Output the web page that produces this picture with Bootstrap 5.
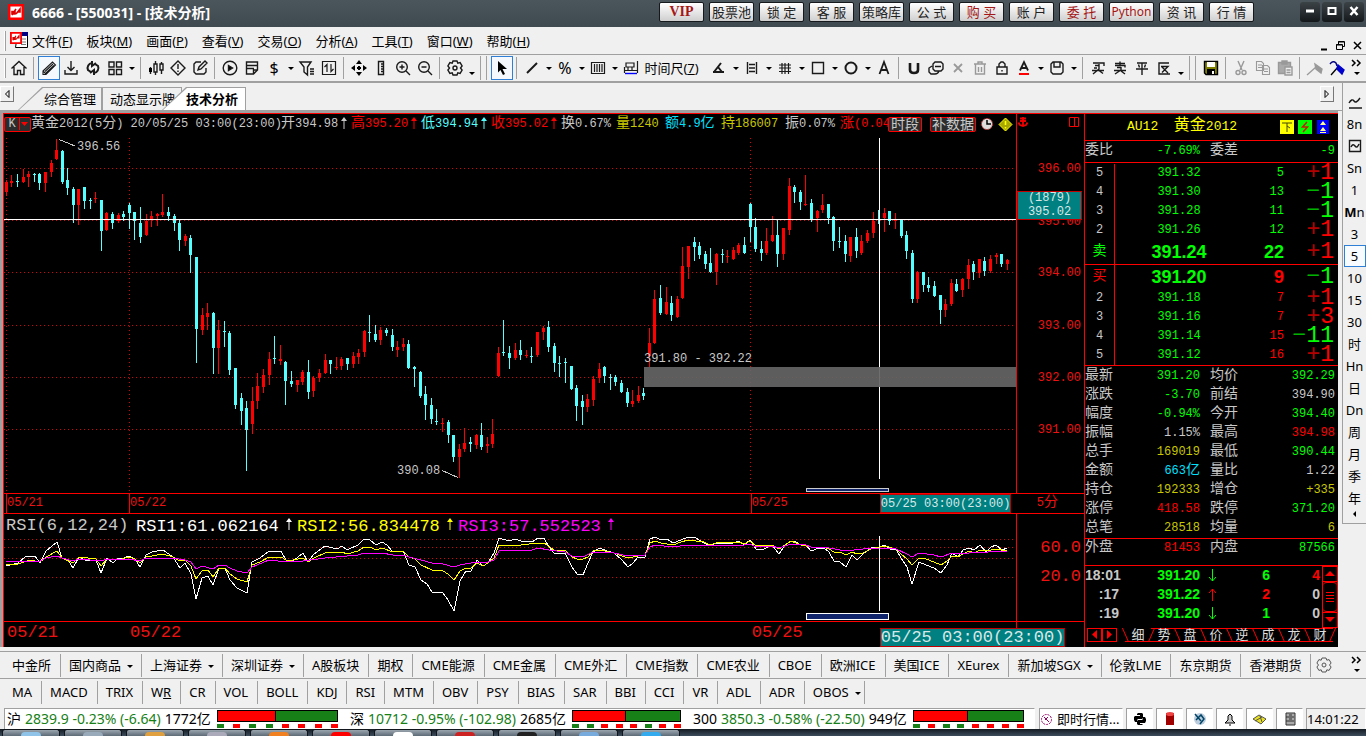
<!DOCTYPE html>
<html lang="zh-CN">
<head>
<meta charset="utf-8">
<meta name="viewport" content="width=device-width, initial-scale=1">
<title>6666 - [550031] - [技术分析]</title>
<link rel="stylesheet" href="https://cdn.jsdelivr.net/npm/bootstrap@5.3.0/dist/css/bootstrap.min.css">
<style>
:root{--face:#f0f0f0;--edge:#a0a0a0;--up:#f00;--down:#0f0;--cy:#54ffff;--txt:#c8c8c8;--yel:#c8c800}
body{font-family:"Noto Sans","Noto Sans CJK SC",sans-serif;font-size:13px;line-height:18px;color:#000;background:var(--face)}
button{border:0;background:none;padding:0;color:inherit;font:inherit;flex-shrink:0;white-space:nowrap}
svg{display:block}
.ico{width:18px;height:18px;fill:none;stroke:#1a1a1a;stroke-width:1.4}
/* title bar */
.title-bar{height:27px;background:linear-gradient(#4b555c,#3f4a50)}
.title-text{font-size:14px;font-weight:700;color:#fff}
.quick{width:45px;height:20px;border:1px solid #15191c;border-radius:2px;background:linear-gradient(#fff,#cfcfcf);font-size:13px;line-height:16px;color:#222;text-align:center}
.quick.hot{color:#a51616}
.quick.py{font-size:12px}
.quick.vip{font-family:"Liberation Serif",serif;font-weight:700;font-size:14px}
.win-btn{width:20px;height:20px;border-radius:3px;background:linear-gradient(#3c4347,#14181b)}
/* menu and tool bars */
.menu-bar{height:28px;border-bottom:1px solid var(--edge)}
.menu-bar a{color:#000;text-decoration:none}
.tool-bar{height:28px;border-bottom:2px solid var(--edge);overflow:hidden}
.grip{width:2px;height:20px;border-left:1px solid #fff;border-right:1px solid var(--edge);flex-shrink:0}
.tb{width:22px;height:24px;display:flex;align-items:center;justify-content:center}
.tb.on{border:1px solid #2f7fd6;background:#f5f9fd}
.tb.off .ico{stroke:#999}
.dd{width:11px;height:24px;display:flex;align-items:center;justify-content:center}
.dd::before,.car::after{content:"";border:3px solid transparent;border-top-color:#000;border-bottom:0}
.dd.low::before{margin-top:10px}
.vsep{width:8px;height:22px;flex-shrink:0;background:linear-gradient(var(--edge),var(--edge)) 3px 0/1px 100% no-repeat}
.gsep{width:14px;height:24px;flex-shrink:0;background:linear-gradient(var(--edge),var(--edge)) 3px 0/1px 100% no-repeat,linear-gradient(var(--edge),var(--edge)) 9px 0/1px 100% no-repeat}
/* page tabs */
.tab-strip{height:28px;border-bottom:1px solid var(--edge)}
.arrow-btn{width:14px;height:16px;border:1px solid #777;border-left-color:#fff;border-top-color:#fff;display:flex;align-items:center;justify-content:center}
.ptab{height:23px;position:relative;background:var(--edge);font-size:13px;line-height:22px;z-index:0}
.ptab::before{content:"";position:absolute;inset:1px 1px 0 1px;background:var(--face);z-index:-1;clip-path:inherit}
.ptab.slant{clip-path:polygon(24px 0,100% 0,100% 100%,0 100%)}
.ptab.active::before{background:#fff}
.ptab.active{font-weight:700;z-index:1}
/* terminal */
.frame{border:solid var(--edge);border-width:2px 0 0 3px}
.term{background:#000;color:var(--txt);border:solid var(--up);border-width:1px 0 0 1px;font-family:"Liberation Mono","Noto Sans CJK SC",monospace;font-size:12px;line-height:18px;white-space:nowrap}
.hz{font-size:14px;line-height:14px}
.big{font-size:17px;line-height:22px}
.c-up{color:var(--up)}.c-dn{color:var(--down)}.c-cy{color:var(--cy)}.c-ye{color:var(--yel)}.c-bl{color:#00e0ff}.c-tx{color:var(--txt)}
.redline-b{border-bottom:1px solid var(--up)}
.redline-t{border-top:1px solid var(--up)}
.redline-r{border-right:1px solid var(--up)}
.axis{width:67px;flex-shrink:0;position:relative;color:#f01010}
.axis span{position:absolute;right:3px;transform:translateY(-50%)}
.plot{min-width:0}
.plot svg,.rsi svg{width:100%;height:100%;position:absolute;inset:0}
.info{position:absolute;left:0;top:0;right:0;height:20px;z-index:2;overflow:hidden}
.info>span{flex-shrink:0}
.arr{display:inline-block;width:8px;height:12px;vertical-align:-2px;margin-left:2px;fill:currentColor;stroke:currentColor}
.plot svg.arr{position:static;width:8px;height:18px;display:inline-block;margin-left:6px}
.q70{width:70px}
.kbtn{height:15px;border:1px solid var(--up);border-radius:2px;background:#2c2c2c;color:var(--txt);line-height:12px}
.note{position:absolute;color:var(--txt)}
.tag{background:#008080;color:#d8e8e8;border:1px solid #c00000}
.date-row{height:20px;position:relative;color:#f01010}
.date-row.tall{height:26px}
.rsi-row{height:108px}
.date-row .at{position:absolute;top:0;bottom:0;border-left:1px solid var(--up)}
.date-row.tall .at{border-left-color:transparent}
.date-row .at.tag{border-left-color:#c00}
.date-row.tall .at.tag{top:6px;line-height:18px;z-index:3}
/* quote panel */
.quote{width:254px;border-left:1px solid var(--up);flex-shrink:0}
.quote table{table-layout:fixed;width:100%;border-collapse:separate;border-spacing:0}
.quote td,.quote th{padding:0;height:19px;line-height:19px;font-weight:400}
#wei{height:22px}
#ask,#stats{padding-top:1px}
.q-head{height:27px;color:#ff0;font-size:13px}
.q-head .hz{font-size:16px}
.flag{width:14px;height:14px}
.best td{height:24px;line-height:24px;font-family:"Liberation Sans",sans-serif;font-weight:700;font-size:18px}
.best th{height:24px}
.quote td.delta{font:23px/19px "Liberation Mono",monospace;text-align:right}
.delta i{font-style:normal;opacity:.7}
.tick td{font-family:"Liberation Sans",sans-serif;font-weight:700;font-size:14px}
.quote table.tick{width:235px}
.sb{width:16px;border:1px solid var(--up);color:var(--up);flex-shrink:0}
.sb button{width:100%;height:15px;font-size:10px;line-height:14px;display:block}
.sb .thumb{border:solid var(--up);border-width:1px 0;border-radius:4px;flex:1}
.q-tab{width:26px;height:14px;position:relative;font-size:13px;line-height:13px;border:solid var(--up);border-width:1px 0;color:#ddd}
.q-tab.active{border-top-color:transparent}
.q-tab::before{content:"";position:absolute;left:0;top:-1px;height:14px;border-left:1px solid var(--up);transform:skewX(24deg)}
.q-tab.back::before,.q-tab.last::after{content:"";position:absolute;top:-1px;height:14px;border-left:1px solid var(--up);transform:skewX(-24deg)}
.q-tab.last::after{right:0}
.sq{width:15px;height:14px;border:1px solid var(--up);display:flex;align-items:center;justify-content:center}
/* period bar */
.period{width:24px;border-left:1px solid var(--edge);flex-shrink:0}
.period button{width:22px;height:22px;line-height:20px;font-size:13px;display:flex;align-items:center;justify-content:center}
.period .on{border:1px solid #2f7fd6;background:#f8fbff}
/* lower bars */
.link-bar{height:27px;border-top:1px solid var(--edge);overflow:hidden}
.link-bar button{height:23px;border-right:1px solid var(--edge);padding:0 9px 0 8px;text-align:center}
.link-bar button.more{border:0;padding:0}
.car::after{display:inline-block;margin:0 -1px 2px 6px}
.status{height:24px;overflow:hidden}
.cell{height:22px;background:#fff;border:1px solid var(--edge);border-right-color:#fff}
.fell{color:#168016}
.idx-part{font-size:14px;flex:1 1 0;white-space:nowrap}
.meter{flex:1;margin:0 10px 0 6px}
.meter .lvl{height:12px;border:1px solid #000;background:#178017}
.meter .lvl div{height:100%;background:#f00;border-right:1px solid #000}
.meter .marks{margin-top:2px}
.meter i{width:7px;height:4px;background:#f00}
.meter i.g{background:#178017}
.task{height:7px;background:linear-gradient(#141b22,#3c4c5c)}
.task div{width:58px;height:7px;background:linear-gradient(#9aa5ae,#5d6b77);border:solid #10161c;border-width:1px 1px 0;border-radius:3px 3px 0 0}
.task div::after{content:"";display:block;width:20px;height:4px;margin:2px auto 0;background:var(--dot,#c6d0d8);border-radius:5px 5px 0 0}
</style>
</head>
<body class="vh-100 d-flex flex-column overflow-hidden">
<svg width="0" height="0" class="position-absolute" aria-hidden="true">
<symbol id="home" viewBox="0 0 18 18"><path d="M1.500 9.500 9 2.500l7.500 7M4 8v7.500h3.500v-4h3v4H14V8"/></symbol>
<symbol id="pencil" viewBox="0 0 18 18"><path stroke-width="1.100" d="M3 12 12.500 3l3 3L6 15.500H3zM5 12.500l8-7.500M6 14l8-7.500M3 12l3 3"/></symbol>
<symbol id="down" viewBox="0 0 18 18"><path d="M9 2v9M5.500 8 9 11.500 12.500 8M3 11v4h12v-4"/></symbol>
<symbol id="sync" viewBox="0 0 18 18"><path stroke-width="2" d="M8 4a5 5 0 0 0-4 7l3 2M10 14a5 5 0 0 0 4-7l-3-2M8 2v5l4-3M10 16v-5l-4 3"/></symbol>
<symbol id="four" viewBox="0 0 18 18"><path d="M3 3h5v5H3zM10.500 3h5v5h-5zM3 10.500h5v5H3zM10.500 10.500h5v5h-5z"/></symbol>
<symbol id="candle" viewBox="0 0 18 18"><path d="M3.500 8v7M8.500 2v14M14.500 3v12"/><path fill="#000" stroke="none" d="M2 9h3v4H2z"/><path fill="#f0f0f0" d="M7 5h3v8H7zM13 5h3v6h-3z"/></symbol>
<symbol id="warn" viewBox="0 0 18 18"><path d="m9 2 7 7-7 7-7-7zM9 5v5M9 11.500v1.500"/></symbol>
<symbol id="edit" viewBox="0 0 18 18"><path d="M10 3H5L3 5v8l2 2h8l2-2V9M7 11l1-3 6-6 2 2-6 6z"/></symbol>
<symbol id="play" viewBox="0 0 18 18"><circle cx="9" cy="9" r="6.800"/><path fill="#000" d="m7.500 6.500 4 2.500-4 2.500z"/></symbol>
<symbol id="memo" viewBox="0 0 18 18"><path d="M3.500 3h11v8l-4 4h-7zM3 6.500h11M3 9.500h8M14.500 11h-4v4"/></symbol>
<symbol id="filter" viewBox="0 0 18 18"><path d="M2 3h11L9.500 8v8L6 13V8zM12 10h4M12 12.500h4M12 15h4"/></symbol>
<symbol id="swap" viewBox="0 0 18 18"><path stroke-width="1.200" d="M2.500 2.500h13v13h-13zM7 13V5.500L4.500 8M11 5v7.500l2.500-2.500"/></symbol>
<symbol id="move" viewBox="0 0 18 18"><path fill="#000" stroke="none" d="m9 1 3 4H6zM9 17l3-4H6zM1 9l4-3v6zM17 9l-4-3v6zM8 7h2v4H8zM7 8h4v2H7z"/></symbol>
<symbol id="ruler" viewBox="0 0 18 18"><path d="M6.500 2.500h5v13h-5zM9 5h2M9 7.500h2M9 10h2M9 12.500h2"/></symbol>
<symbol id="zin" viewBox="0 0 18 18"><circle cx="8" cy="8" r="5.300"/><path d="M8 5.500v5M5.500 8h5M12 12l4 4"/></symbol>
<symbol id="zout" viewBox="0 0 18 18"><circle cx="8" cy="8" r="5.300"/><path d="M5.500 8h5M12 12l4 4"/></symbol>
<symbol id="gear" viewBox="0 0 18 18"><path d="M7 2h4l.8 2.200 2.300-.6 2 3.400L14.500 9l1.600 2-2 3.400-2.300-.6L11 16H7l-.8-2.200-2.300.6-2-3.400L3.500 9 1.900 7l2-3.400 2.300.6z"/><circle cx="9" cy="9" r="2"/></symbol>
<symbol id="cursor" viewBox="0 0 18 18"><path fill="#000" stroke="none" d="m5 2 9 8H9.500l2.500 5-2 1-2.500-5L5 13.500z"/></symbol>
<symbol id="line" viewBox="0 0 18 18"><path stroke-width="2" d="M4 14 14 4"/></symbol>
<symbol id="vbars" viewBox="0 0 18 18"><path stroke-width="1.200" d="M2.500 3.500h13v11h-13zM5.500 5v8M8 5v8M10.500 5v8M13 5v8"/></symbol>
<symbol id="span" viewBox="0 0 18 18"><path stroke-width="1.200" d="M3 4h8v4H3zM5 8v3M9 8v3M1.500 8v6M14.500 2v12M1 11.500h14"/><path stroke="#00f" d="M2 14.500h12"/></symbol>
<symbol id="angle" viewBox="0 0 18 18"><path stroke-width="2" d="M3 13h11M4 13l7-9M8 8l4 5"/></symbol>
<symbol id="hbars" viewBox="0 0 18 18"><path d="M4.500 3v12M13.500 3v12M6 5.500h6M6 9h6M6 12.500h6"/></symbol>
<symbol id="hash" viewBox="0 0 18 18"><path d="M3 6h12M3 9h12M3 12.500h12M6 4v11M9 4v11M12.500 4v11" stroke-width="1.200"/></symbol>
<symbol id="rect" viewBox="0 0 18 18"><path d="M3.500 3.500h11v11h-11z"/></symbol>
<symbol id="circ" viewBox="0 0 18 18"><circle cx="9" cy="9" r="5.500" stroke-width="2"/></symbol>
<symbol id="letter" viewBox="0 0 18 18"><path stroke-width="1.800" d="M4.500 15 9 3l4.500 12M6 11h6"/></symbol>
<symbol id="magnet" viewBox="0 0 18 18"><path stroke-width="2.600" d="M5 4v7q0 3 4 3t4-3V4"/></symbol>
<symbol id="stack" viewBox="0 0 18 18"><path d="M8 3h6l2 2v5l-2 2H8L6 10V5zM12 12q-1 3-4 3H4l-2-2V9l3-2M8 7.500h6"/></symbol>
<symbol id="cross" viewBox="0 0 18 18"><path stroke-width="1.800" d="m5 5 8 8M13 5l-8 8"/></symbol>
<symbol id="bin" viewBox="0 0 18 18"><path d="M3 5h12M7 5V3h4v2M4.500 5v10h9V5M7.500 8v5M10.500 8v5"/></symbol>
<symbol id="lock" viewBox="0 0 18 18"><path d="M4 8h10v7H4zM6 8V5l2-2h2l2 2v3M9 11v1.500"/></symbol>
<symbol id="acol" viewBox="0 0 18 18"><path stroke-width="1.800" d="M5 11.500 9 3l4 8.500M6.500 9h5"/><path stroke="red" stroke-width="2" d="M4 15h10"/></symbol>
<symbol id="save" viewBox="0 0 18 18"><path d="M3 5l2-2h8l2 2v8l-2 2H5l-2-2zM6 3v5h6V3"/></symbol>
<symbol id="buy" viewBox="0 0 18 18"><path d="M4 4h11v3M6 6.500h4M5 9h3M3 11.500h12M10 5v5l-6 5M10 11.500l4 3"/></symbol>
<symbol id="sell" viewBox="0 0 18 18"><path d="M4 4.500h10M9 2.500v4M4 6.500h10v2M6 8.500h4M3 11.500h12M10 8v3l-6 4M10 12l4 3"/></symbol>
<symbol id="flat" viewBox="0 0 18 18"><path d="M4 4h10M3 10h12M9 4v12M5.500 5.500l1 3M12.500 5.500l-1 3"/></symbol>
<symbol id="rev" viewBox="0 0 18 18"><path d="M14 4H4v11h11M6 7.500h7l-6 6M7 8l6 6"/></symbol>
<symbol id="disk" viewBox="0 0 18 18"><path fill="#808000" stroke="#000" d="M2.500 2.500h13v13H4L2.500 14z"/><path fill="#fff" stroke="none" d="M5 3h8v5H5z"/><path fill="#000" stroke="none" d="M5 10h8v6H5z"/><path fill="#fff" stroke="none" d="M10 12h2v3h-2z"/></symbol>
<symbol id="cut" viewBox="0 0 18 18"><path d="M6 2l4 9M12 2 8 11"/><circle cx="6" cy="13.500" r="2"/><circle cx="12" cy="13.500" r="2"/></symbol>
<symbol id="copy" viewBox="0 0 18 18"><path stroke-width="1.100" d="M2.500 2.500h5l2 2v7h-7zM8.500 6.500h5l2 2v7h-7zM4 6h4M4 8.500h4M10 10h4M10 12.500h4"/></symbol>
<symbol id="paste" viewBox="0 0 18 18"><path fill="#aaa" d="M2.500 3.500h12v11h-12zM6 2h5v3H6z"/><path fill="#eee" d="M9 8h7v8H9zM10.500 11h4M10.500 13.500h4"/></symbol>
<symbol id="pin" viewBox="0 0 18 18"><path d="M1 16 10 8"/><path fill="#999" d="m9 5 1 5 5 4 1-4z"/></symbol>
<symbol id="pinb" viewBox="0 0 18 18"><path stroke="#000" d="M3 16 10 8"/><path stroke="#000080" d="M2 5q3-4 6-1l1 3"/><path fill="#00c" stroke="#00c" d="m10 6-1 4 5 5 2-4z"/></symbol>
<symbol id="arrow" viewBox="0 0 8 12"><path stroke="none" d="M4 0 7 4H1z"/><path d="M4 3v9"/></symbol>
<symbol id="brand" viewBox="0 0 16 16"><path fill="#fff" stroke="#f00" stroke-width="2.500" d="M1.200 1.200h13.600v13.600H1.200z"/><path fill="none" stroke="#d00" stroke-width="1.600" d="m4 11 4-6M4 7.500h3v2.500H4zM8 10l4-5v3H9"/></symbol>
</svg>

<header class="title-bar d-flex align-items-start flex-shrink-0">
  <svg width="16" height="16" class="ms-2 mt-1"><use href="#brand"/></svg>
  <span class="title-text mt-1 ps-2">6666 - [550031] - [技术分析]</span>
  <div class="d-flex ms-auto" id="quick" style="gap:5px;margin:2px 46px 0 0"></div>
  <div class="d-flex" style="gap:2px;margin:2px 2px 0 0">
    <button class="win-btn" aria-label="最小化"><svg width="20" height="20"><path d="M6 9h8" stroke="#fff" stroke-width="3"/></svg></button>
    <button class="win-btn" aria-label="最大化"><svg width="20" height="20"><path d="M6.500 6h7v6h-7z" fill="none" stroke="#fff" stroke-width="2"/></svg></button>
    <button class="win-btn" aria-label="关闭"><svg width="20" height="20"><path d="m6.500 5 7 8M13.500 5l-7 8" stroke="#fff" stroke-width="2.500"/></svg></button>
  </div>
</header>

<nav class="menu-bar d-flex align-items-center flex-shrink-0 ps-1">
  <span class="grip"></span>
  <svg width="18" height="17" class="mx-1"><path fill="#fff" stroke="#000" d="M7.500 2.500h10v13h-12z"/><path fill="#000080" d="M8 0h10v4H8z"/><path stroke="#777" d="M11 7h5M11 10h5M11 12.500h5"/><svg width="12" height="12" viewBox="0 0 16 16"><use href="#brand"/></svg></svg>
  <div class="d-flex" id="menu" style="gap:14px"></div>
  <div class="d-flex ms-auto align-items-end pt-2 pe-1 gap-2">
    <svg width="8" height="12"><path d="M1 10.500h6" stroke="#000" stroke-width="2"/></svg>
    <svg width="9" height="12" fill="none" stroke="#000"><path d="M2.500 5V2.500h6v5H7M.500 5.500h6v5h-6zM2 3h6M0 6h6"/></svg>
    <svg width="9" height="12"><path d="m1 3 7 7M8 3l-7 7" stroke="#000" stroke-width="1.500"/></svg>
  </div>
</nav>

<div class="tool-bar d-flex align-items-center flex-shrink-0" id="tools">
  <span class="grip ms-1 me-0"></span><span style="width:2px"></span>
</div>

<div class="d-flex flex-grow-1" style="min-height:0">
  <main class="d-flex flex-column flex-grow-1" style="min-width:0">
    <div class="tab-strip d-flex align-items-end flex-shrink-0">
      <button class="arrow-btn mb-2" aria-label="向左"><svg width="6" height="8"><path d="M5 .500v7L1.500 4z" fill="none" stroke="#000"/></svg></button>
      <button class="ptab slant ms-1 ps-4 pe-1" style="width:84px">综合管理</button>
      <button class="ptab text-start ps-2" style="width:80px">动态显示牌</button>
      <button class="ptab slant active ps-4 pe-2" style="width:84px;margin-left:-20px">技术分析</button>
      <button class="arrow-btn mb-2 ms-auto me-2" aria-label="向右"><svg width="6" height="8"><path d="M1 .500v7L4.500 4z" fill="none" stroke="#000"/></svg></button>
    </div>
    <div class="frame d-flex flex-grow-1 me-1 mb-1" style="min-height:0">
      <div class="term d-flex flex-grow-1" style="min-width:0">
        <section class="d-flex flex-column flex-grow-1" style="min-width:0">
          <div class="d-flex flex-grow-1 position-relative" style="min-height:0">
            <div class="info d-flex align-items-center">
              <button class="kbtn d-flex align-items-center" style="width:27px"><span class="flex-grow-1 redline-r">K</span><svg width="8" height="6" style="margin:2px 1px 0"><path d="M0 0h7L3.500 4z" fill="#f00"/></svg></button>
              <span class="mix" style="width:250px">黄金2012(5分) 20/05/25 03:00(23:00)</span>
              <span class="mix q70">开394.98↑</span><span class="mix q70 c-up">高395.20↑</span><span class="mix q70 c-cy">低394.94↑</span><span class="mix q70 c-up">收395.02↑</span>
              <span class="mix" style="width:55px">换0.67%</span><span class="mix c-ye" style="width:49px">量1240</span><span class="mix c-bl" style="width:56px">额4.9亿</span><span class="mix c-ye" style="width:64px">持186007</span><span class="mix" style="width:55px">振0.07%</span><span class="mix c-up" style="width:48px">涨(0.04</span>
              <button class="kbtn mix text-center me-2" style="width:34px">时段</button><button class="kbtn mix text-center" style="width:46px">补数据</button>
              <svg width="14" height="14" class="ms-1 flex-shrink-0"><circle cx="7" cy="7" r="5.500" fill="#ddd" stroke="#c33" stroke-dasharray="2 1"/><path d="M7 3v4h4" stroke="#000" stroke-width="1.500" fill="none"/></svg>
              <svg width="15" height="15" class="ms-1 flex-shrink-0"><path d="m7.500 1 6.500 6.500L7.500 14 1 7.500z" fill="#a8a800" stroke="#ff0"/><path d="M7.500 4v4M7.500 10v1.500" stroke="#ff0" stroke-width="1.600"/></svg>
              <svg width="12" height="12" class="mb-1 ms-1 flex-shrink-0"><path d="M6 1v9M3 2.500h6M3 5h6M1.500 6.500 3 9l3 1 3-1 1.500-2.500" stroke="#e00" stroke-width="1.800" fill="none"/></svg>
              <svg width="11" height="11" class="ms-auto me-1 mb-1"><path d="M.500 .500h9v9h-9zM5.500 0v10" stroke="#f00" fill="none"/></svg>
            </div>
            <div class="plot flex-grow-1 position-relative redline-r" id="plot">
              <svg id="kline" viewBox="4 114 1012 379" preserveAspectRatio="none" shape-rendering="crispEdges"></svg>
            </div>
            <div class="axis" id="axis"></div>
          </div>
          <div class="date-row redline-t flex-shrink-0" id="dates"></div>
          <div class="d-flex redline-t flex-shrink-0 rsi-row">
            <div class="rsi plot flex-grow-1 position-relative redline-r">
              <svg id="rsi" viewBox="4 514 1012 107" preserveAspectRatio="none"></svg>
              <div class="position-relative d-flex big" style="padding:1px 0 0 2px">
                <span style="width:130px">RSI(6,12,24)</span><span style="width:161px;color:#fff">RSI1:61.062164<svg class="arr"><use href="#arrow"/></svg></span><span style="width:161px;color:#ff0">RSI2:56.834478<svg class="arr"><use href="#arrow"/></svg></span><span style="color:#f0f">RSI3:57.552523<svg class="arr"><use href="#arrow"/></svg></span>
              </div>
            </div>
            <div class="axis big" id="raxis"></div>
          </div>
          <div class="date-row tall big redline-t flex-shrink-0" id="dates2"></div>
        </section>

        <aside class="quote d-flex flex-column">
          <div class="q-head d-flex align-items-center redline-b">
            <span class="mix" style="padding-left:42px">AU12&nbsp; 黄金2012</span>
            <span class="d-flex ms-auto me-2" style="gap:4px">
              <svg class="flag"><path fill="#ff0" d="M0 0h14v14H0z"/><path d="M2 3h10M7 3v9M7 6l3 2" stroke="#444400"/></svg>
              <svg class="flag"><path fill="#0f0" d="M0 0h14v14H0z"/><path d="M9 2 4.500 7h5L5 12" fill="none" stroke="#c02000" stroke-width="1.500"/></svg>
              <svg class="flag"><path fill="#00f" d="M1 0h12v14H1z"/><path d="m7 1 3 4H4zM7 7l3 4H4zM4 12h6v1H4z" fill="#ff8"/></svg>
            </span>
          </div>
          <table id="wei" class="redline-b"></table>
          <table id="ask" class="redline-b"></table>
          <table id="bid" class="redline-b"></table>
          <table id="stats" class="redline-b"></table>
          <table id="inout" class="redline-b"></table>
          <div class="d-flex justify-content-between" style="height:62px">
            <table id="ticks" class="tick align-self-start"></table>
            <div class="sb d-flex flex-column"><button class="redline-b d-flex align-items-center justify-content-center" aria-label="上"><svg width="10" height="6"><path d="M5 0l5 5H0z" fill="#f00"/></svg></button><button class="thumb d-flex align-items-center justify-content-center" aria-label="滑块"><svg width="8" height="12"><path d="M0 1.500h8M0 4.500h8M0 7.500h8M0 10.500h8" stroke="#f00"/></svg></button><button class="redline-t d-flex align-items-center justify-content-center" aria-label="下"><svg width="10" height="6"><path d="M5 5l5-5H0z" fill="#f00"/></svg></button></div>
          </div>
          <div class="d-flex align-items-center" id="qtabs" style="padding-left:2px">
            <button class="sq" aria-label="前"><svg width="6" height="10"><path d="M5 0v9L0 4.500z" fill="#f00"/></svg></button><button class="sq me-2" aria-label="后"><svg width="6" height="10"><path d="M0 0v9l5-4.500z" fill="#f00"/></svg></button>
          </div>
        </aside>
      </div>
    </div>
  </main>
  <nav class="period d-flex flex-column align-items-center align-self-start pt-2 mb-auto" id="period" style="border-bottom:1px solid var(--edge)"></nav>
</div>

<nav class="link-bar d-flex align-items-center flex-shrink-0 ps-1" id="mk"></nav>
<nav class="link-bar d-flex align-items-center flex-shrink-0 ps-1" id="ind"></nav>

<footer class="status d-flex align-items-center flex-shrink-0 pt-1">
  <div class="cell d-flex align-items-center flex-grow-1 ms-1" id="idx"></div>
  <div class="cell d-flex align-items-center ms-1" style="width:84px"><svg width="13" height="13" class="me-1"><circle cx="6.500" cy="6.500" r="5" fill="#fff" stroke="#906" stroke-dasharray="2 1"/><path d="m4 4 5 5M8 4 5 7" stroke="#906"/></svg>即时行情...</div>
  <div class="d-flex" style="gap:3px;margin:0 3px" id="tray"></div>
  <div class="cell d-flex align-items-center" style="width:60px;background:var(--face)">14:01:22</div>
</footer>
<div class="task d-flex flex-shrink-0" id="task" style="gap:4px;padding-left:2px"></div>

<script src="https://cdn.jsdelivr.net/npm/bootstrap@5.3.0/dist/js/bootstrap.bundle.min.js"></script>
<script>
const $ = id => document.getElementById(id);
const add = (id, html) => $(id).insertAdjacentHTML('beforeend', html);

// Title, menu and tool bars
'VIP,股票池,锁 定,客 服,策略库,公 式,购 买,账 户,委 托,Python,资 讯,行 情'.split(',').forEach(t =>
  add('quick', `<button class="quick ${/VIP|购|委|Py/.test(t) ? 'hot' : ''} ${t === 'VIP' ? 'vip' : t === 'Python' ? 'py' : ''}">${t}</button>`));
'文件F,板块M,画面P,查看V,交易O,分析A,工具T,窗口W,帮助H'.split(',').forEach(t =>
  add('menu', `<a href="#">${t.slice(0, 2)}(<u>${t[2]}</u>)</a>`));
const tools = 'home | *pencil down sync four v | candle warn edit | play memo $ v filter swap | move ruler zin zout | gear w || *cursor | line v % v vbars v T angle v hbars v hash v rect v circ v letter | magnet stack -cross -bin lock acol v save v | buy sell flat rev w || disk | -cut -copy -paste | -pin pinb';
tools.split(' ').forEach(t => {
  const ic = n => `<svg class="ico"><use href="#${n}"/></svg>`;
  add('tools', t === '|' ? '<span class="vsep"></span>' : t === '||' ? '<span class="gsep"></span>'
    : t === 'v' ? '<button class="dd" aria-label="更多"></button>' : t === 'w' ? '<button class="dd low" aria-label="更多"></button>'
    : t === 'T' ? `<button class="d-flex align-items-center" style="width:88px;padding-left:3px">${ic('span')}<span>&nbsp;时间尺(<u>7</u>)</span></button>`
    : /[$%]/.test(t) ? `<button class="tb" style="font-size:16px">${t}</button>`
    : `<button class="tb ${t[0] === '*' ? 'on' : t[0] === '-' ? 'off' : ''}" aria-label="${t.replace(/\W/, '')}">${ic(t.replace(/\W/, ''))}</button>`);
});
const more = '<button class="more ms-auto me-1" aria-label="更多"><svg width="11" height="20"><path d="m1 2 3 3-3 3M6 2l3 3-3 3" fill="none" stroke="#000" stroke-width="1.500"/><path d="M3 14h6l-3 3z"/></svg></button>';
add('tools', more);

// Candles: [rising, high, body top, body bottom, low]
const K = `1 180 182 192 195|1 175 181 183 186|0 174 181 182 186|1 169 177 182 182|1 171 174 177 186|0 173 174 175 181|0 173 174 183 189|1 172 172 183 191|1 160 163 172 176|1 139 150 159 159|0 150 151 182 183|0 168 180 188 194|0 187 189 205 222|1 189 189 205 224|0 187 187 201 208|0 198 200 201 208|1 192 198 199 202|0 200 200 231 250|1 212 213 230 230|0 212 214 223 228|1 213 215 221 222|0 211 214 217 220|0 203 205 213 228|0 212 212 221 239|0 207 223 237 242|1 214 221 235 235|1 211 216 219 226|1 213 214 216 225|1 194 212 215 216|0 207 212 216 220|0 214 216 223 230|0 219 223 240 250|1 234 236 241 245|0 235 238 255 272|0 257 257 329 362|1 308 315 330 334|1 303 313 317 329|0 312 313 348 373|1 320 330 348 373|0 321 331 332 346|0 331 333 370 374|0 368 368 405 408|0 393 398 411 424|0 401 408 430 470|1 387 401 424 433|1 373 386 401 408|1 369 375 387 392|1 352 359 375 384|0 336 358 359 363|1 345 359 361 364|0 361 362 381 404|0 371 381 384 386|1 380 380 385 391|1 370 372 382 384|0 360 372 392 398|1 376 378 391 396|1 369 373 378 381|1 354 360 373 373|0 360 360 364 373|1 357 367 368 369|1 357 359 366 369|0 358 358 364 369|1 352 356 364 367|1 349 353 357 363|1 330 331 352 356|0 315 332 333 341|0 325 334 340 341|1 327 330 340 344|0 328 330 333 335|0 329 335 347 350|1 341 347 350 356|1 338 344 347 350|0 340 344 368 368|0 366 367 369 386|0 371 372 396 397|0 386 394 405 419|0 398 405 419 423|0 409 421 422 424|1 418 423 424 431|0 420 422 435 442|0 435 435 457 461|1 444 449 457 477|1 428 443 449 451|0 437 442 444 451|1 434 435 445 448|0 423 435 447 449|1 437 444 446 452|1 419 434 444 447|1 347 353 376 376|0 320 352 353 355|0 346 353 358 368|1 343 350 358 359|0 340 350 355 359|1 350 355 356 357|0 347 356 357 362|1 332 332 355 356|1 326 328 332 339|0 321 327 347 351|0 343 346 363 371|0 356 363 364 376|0 358 362 363 382|0 366 366 389 389|0 385 388 406 420|0 395 401 407 424|1 394 399 407 411|1 376 379 400 405|1 363 369 378 382|0 366 367 376 382|0 374 377 378 389|0 375 377 382 385|0 380 383 392 392|0 388 392 403 406|1 390 401 404 406|1 386 395 401 402|0 388 393 396 399|1 328 343 356 366|1 290 299 343 343|0 285 298 313 314|1 287 302 314 314|0 296 303 315 320|1 296 299 317 317|1 247 266 298 298|1 246 246 267 278|0 237 242 247 260|0 242 246 255 258|0 251 254 264 268|0 248 263 272 272|1 253 254 272 284|0 249 254 255 262|1 250 256 257 262|1 247 250 259 259|1 243 245 253 254|0 237 245 253 253|0 203 204 227 241|0 218 227 249 251|0 241 249 253 260|1 228 241 253 254|1 216 235 241 241|0 220 235 254 266|1 228 228 254 259|1 178 186 230 234|0 185 187 192 202|0 190 192 202 209|1 175 204 205 205|0 199 203 220 221|1 210 211 218 231|1 194 205 210 212|0 204 204 218 223|0 216 217 241 250|0 227 241 242 247|0 235 241 254 261|1 237 237 256 261|0 228 237 251 257|1 235 241 253 254|1 230 233 241 242|1 212 221 233 237|0 210 219 220 223|1 208 213 218 231|0 211 211 221 224|1 213 220 221 228|0 220 220 236 237|0 231 235 251 258|0 250 253 299 302|1 271 272 299 302|0 272 272 285 291|0 277 285 288 291|0 281 286 296 296|0 295 295 310 323|1 299 304 310 316|1 279 283 304 305|0 279 284 291 291|1 278 279 290 296|1 259 265 279 288|0 261 264 272 279|1 259 259 273 277|0 257 261 271 275|1 255 259 271 272|1 253 255 257 263|0 254 254 264 266|1 259 260 264 269`.split('|').map(r => r.split(' ').map(Number));
const dots = 'stroke="#e00000" stroke-dasharray="1 3" fill="none"';
let s = '';
[168, 220, 272, 325, 377, 429].forEach(y => s += `<path ${dots} d="M4 ${y}.5H1016"/>`);
[6, 129, 750].forEach(x => s += `<path ${dots} d="M${x}.5 138V492"/>`);
K.forEach(([up, h, t, b, l], i) => {
  const x = Math.round(5.8 + i * 5.592), c = up ? '#f00' : '#54ffff';
  s += `<path fill="${c}" d="M${x} ${h}h1V${l + 1}h-1zM${x - 1} ${t}h3V${Math.max(b, t + 1)}h-3z"/>`;
});
s += `<path stroke="#fff" d="M4 219.500H1016M879.500 138V479"/><path fill="#646464" fill-opacity=".93" d="M644 367h372v20H644z"/>
<path stroke="#c8c8c8" fill="none" d="M59 139.500 75 146M442 470.500l16 7"/>
<path stroke="#ccc" fill="#10246c" d="M806.500 488.500h82v3h-82z"/>`;
$('kline').innerHTML = s;

// Labels placed by their share of the plot
const px = x => (x - 4) / 1012 * 100, py = y => (y - 114) / 379 * 100;
[['396.56', 77, 138], ['390.08', 397, 462], ['391.80 - 392.22', 644, 350]].forEach(([t, x, y]) =>
  add('plot', `<span class="note" style="left:${px(x)}%;top:${py(y)}%">${t}</span>`));
[[396, 169], [395, 222], [394, 273], [393, 326], [392, 378], [391, 430]].forEach(([p, y]) => add('axis', `<span style="top:${py(y)}%">${p}.00</span>`));
add('axis', `<div class="tag position-absolute start-0 text-center d-flex flex-column justify-content-center" style="width:65px;height:29px;line-height:14px;top:${py(191)}%"><div>(1879)</div><div>395.02</div></div>`);
[['60.0', 547], ['20.0', 577]].forEach(([t, y]) => add('raxis', `<span style="top:${(y - 513) / 108 * 100}%">${t}</span>`));
['dates', 'dates2'].forEach(id => {
  [['05/21', 6], ['05/22', 129], ['05/25', 750]].forEach(([t, x]) => add(id, `<span class="at" style="left:${(x - 4) / 1079 * 100}%">${t}</span>`));
  add(id, `<span class="at tag" style="left:${(879 - 4) / 1079 * 100}%">05/25 03:00(23:00)</span>`);
});
add('dates', '<span class="mix position-absolute" style="right:26px">5分</span>');
add('dates2', '<span class="position-absolute redline-r h-100 top-0" style="right:67px"></span>');

// RSI curves
const R = {
 w: '6,566 18,563 25,557 35,556 40,563 46,551 57,542 62,558 68,560 73,568 79,557 85,560 96,560 101,573 107,558 113,563 118,558 124,558 129,556 135,559 140,567 146,555 152,552 163,550 173,557 180,568 185,563 191,574 196,599 202,578 208,576 213,585 219,568 225,568 230,580 237,588 247,593 252,562 260,558 269,551 281,551 286,560 293,561 303,553 308,562 314,554 325,546 337,549 342,546 347,550 358,545 364,539 370,540 376,545 382,542 387,545 393,552 403,551 409,565 415,567 421,580 427,584 432,592 443,593 448,600 454,611 460,581 466,571 471,571 477,560 483,566 488,563 494,553 499,538 509,541 515,539 521,541 532,542 538,538 544,538 549,547 554,553 565,553 572,567 577,574 583,575 588,563 593,552 600,548 607,551 614,553 622,560 628,567 633,563 638,557 645,557 650,539 655,537 661,540 667,539 673,543 681,540 688,537 696,538 704,543 710,546 716,543 733,543 739,541 744,545 750,540 756,549 762,550 772,545 779,554 785,545 791,541 796,542 801,545 806,545 811,551 819,548 824,548 829,552 834,561 840,562 846,567 852,555 857,560 863,554 871,548 880,547 885,545 890,549 896,549 901,558 907,567 912,584 919,562 926,565 934,568 941,573 947,565 952,553 958,557 963,550 969,548 974,550 980,545 986,552 991,547 996,545 1002,550 1007,548',
 y: '6,565 18,564 30,560 40,562 46,557 57,551 62,558 73,563 79,557 96,559 101,566 107,559 118,560 129,557 135,559 140,563 146,557 163,554 173,557 180,561 185,560 191,566 196,579 202,571 208,570 213,577 219,568 225,568 230,574 237,579 247,582 252,565 260,562 269,557 281,557 286,560 293,560 303,558 308,562 314,558 325,553 342,552 347,554 358,551 364,547 370,547 376,550 382,548 393,552 403,551 409,557 415,559 421,565 432,570 443,571 448,574 454,580 460,571 466,568 471,568 477,563 483,566 488,563 494,558 499,545 509,545 521,545 538,543 544,543 554,550 565,550 572,557 577,559 583,559 588,557 593,551 600,550 614,553 622,556 628,558 638,556 645,555 650,543 655,541 661,543 673,545 681,542 688,540 704,542 710,545 716,543 739,542 744,544 750,541 756,546 772,545 779,549 785,545 791,541 801,545 811,547 824,547 829,549 834,552 840,552 846,555 852,552 857,554 863,553 871,549 880,547 885,546 896,549 901,554 907,559 912,565 919,558 926,559 934,562 941,565 947,561 952,556 958,557 963,554 969,551 974,553 980,550 986,551 996,549 1007,551',
 m: '6,562 18,561 40,561 46,558 57,556 62,558 73,561 79,559 101,561 107,559 129,559 140,561 146,558 173,558 185,560 191,562 196,569 202,566 213,569 219,565 225,565 230,568 237,571 247,573 252,567 269,560 286,562 303,561 325,558 358,555 364,553 382,553 393,555 403,555 409,557 421,560 432,563 443,564 454,567 460,565 471,563 477,562 488,562 494,560 499,551 532,550 538,548 549,550 565,552 572,556 583,557 593,552 614,553 628,556 645,555 650,547 655,545 673,547 688,545 716,545 744,545 750,544 756,547 772,546 779,548 785,546 791,544 806,545 811,547 829,548 846,551 863,549 885,548 896,549 907,554 912,557 919,553 934,555 941,557 952,553 969,553 1007,551'};
$('rsi').innerHTML = '<g shape-rendering="crispEdges">' + [539, 547, 558, 577].map(y => `<path ${dots} d="M4 ${y}.5H1016"/>`).join('')
  + Object.entries({ w: '#fff', y: '#ff0', m: '#f0f' }).map(([k, c]) => `<polyline fill="none" stroke="${c}" points="${R[k]}"/>`).join('')
  + '<path stroke="#fff" d="M879.500 536V611"/><path stroke="#fff" fill="#10246c" d="M806.500 613.500h82v6h-82z"/></g>';

// Order book
const row = (n, p, v, d, vc, best) => `<tr class="${best || ''}"><th class="redline-r text-center mix ${n === '卖' ? 'c-dn' : n === '买' ? 'c-up' : ''}" style="width:30px">${n}</th><td class="c-dn text-center" style="width:128px">${p}</td><td class="vol text-end ${vc}" style="width:41px">${v}</td><td class="delta ${d[0] === '+' ? 'c-up' : 'c-dn'}"><i>${d[0]}</i>${d.slice(1)}</td><td style="width:4px"></td></tr>`;
[[5, '391.32', 5, '+1'], [4, '391.30', 13, '−1'], [3, '391.28', 11, '−1'], [2, '391.26', 12, '+1'], ['卖', '391.24', 22, '+1']].forEach(r => add('ask', row(...r, 'c-dn', r[0] === '卖' && 'best')));
[['买', '391.20', 9, '−1'], [2, '391.18', 7, '+1'], [3, '391.16', 7, '+3'], [4, '391.14', 15, '−11'], [5, '391.12', 16, '+1']].forEach(r => add('bid', row(...r, 'c-up', r[0] === '买' && 'best')));
const pair = (a, b, bc, c, d, dc) => `<tr><th class="mix" style="width:46px">${a}</th><td class="mix text-end ${bc}" style="width:69px">${b}</td><th class="mix" style="width:55px;padding-left:10px">${c}</th><td class="text-end ${dc}" style="padding-right:3px">${d}</td></tr>`;
add('wei', pair('委比', '-7.69%', 'c-dn', '委差', '-9', 'c-dn'));
[['最新', '391.20', 'c-dn', '均价', '392.29', 'c-dn'], ['涨跌', '-3.70', 'c-dn', '前结', '394.90', ''], ['幅度', '-0.94%', 'c-dn', '今开', '394.40', 'c-dn'], ['振幅', '1.15%', '', '最高', '394.98', 'c-up'], ['总手', '169019', 'c-ye', '最低', '390.44', 'c-dn'], ['金额', '663亿', 'c-bl', '量比', '1.22', ''], ['持仓', '192333', 'c-ye', '增仓', '+335', 'c-ye'], ['涨停', '418.58', 'c-up', '跌停', '371.20', 'c-dn'], ['总笔', '28518', 'c-ye', '均量', '6', 'c-ye']].forEach(r => add('stats', pair(...r)));
add('inout', pair('外盘', '81453', 'c-up', '内盘', '87566', 'c-dn') + '<tr><td colspan="4" style="height:7px;line-height:7px"></td></tr>');
[['18:01', '391.20', '↓', 6, 4], [':17', '391.22', '↑', 2, 0], [':19', '391.20', '↓', 1, 0]].forEach(([t, p, a, v, o]) => {
  const c = a === '↑' ? 'c-up' : 'c-dn';
  add('ticks', `<tr><td class="text-end" style="width:34px">${t}</td><td class="c-dn text-end" style="width:81px">${p}</td><td class="${c} text-center" style="width:24px"><svg class="mx-auto" width="9" height="13" fill="none" stroke="currentColor"><path d="${a === '↑' ? 'M4.5 13V1M1 5l3.500-4L8 5' : 'M4.5 0v12M1 8l3.500 4L8 8'}"/></svg></td><td class="${c} text-end" style="width:46px">${v}</td><td class="text-end ${o ? 'c-up' : ''}" style="width:50px">${o}</td></tr>`);
});
[...'细势盘价逆成龙财'].forEach((t, i) => add('qtabs', `<button class="q-tab ${i === 0 ? 'active' : i === 1 ? 'back' : i === 7 ? 'last' : ''}">${t}</button>`));

// Inside the monospaced terminal text, Chinese runs are set larger and arrows are drawn
document.querySelectorAll('.mix').forEach(e => e.innerHTML = e.innerHTML.replace(/[\u4e00-\u9fff]+/g, '<span class="hz">$&</span>').replace('↑', '<svg class="arr"><use href="#arrow"/></svg>'));

// Period bar
const wave = '<svg class="ico"><path d="M3 10q3-5 5-2t6-3M3 15h13"/></svg>', boxw = '<svg class="ico"><path d="M3.500 3.500h11v11h-11zM5 10q2-4 4-1t4-2"/></svg>';
[wave, '8n', boxw, 'Sn', '1', '<b>M</b>n', '3', '5', '10', '15', '30', '时', 'Hn', '日', 'Dn', '周', '月', '季', '年'].forEach(t => add('period', `<button class="${t === '5' ? 'on' : ''}">${t}</button>`));
add('period', '<svg width="6" height="14"><path d="M4 2v6L1 5z"/></svg>');

// Market and indicator bars
'中金所,国内商品v,上海证券v,深圳证券v,A股板块,期权,CME能源,CME金属,CME外汇,CME指数,CME农业,CBOE,欧洲ICE,美国ICE,XEurex,新加坡SGXv,伦敦LME,东京期货,香港期货'.split(',').forEach(t =>
  add('mk', `<button class="${t.endsWith('v') ? 'car' : ''}">${t.replace('v', '')}</button>`));
add('mk', '<svg class="ico ms-1" style="stroke:#555;stroke-width:1"><use href="#gear"/></svg>' + more);
'MA,MACD,TRIX,W<u>R</u>,CR,VOL,BOLL,KDJ,RSI,MTM,OBV,PSY,BIAS,SAR,BBI,CCI,VR,ADL,ADR,OBOS'.split(',').forEach(t =>
  add('ind', `<button class="${t === 'OBOS' ? 'car pe-1' : ''}">${t}</button>`));

// Index strip
[['沪', '2839.9 -0.23% (-6.64)', '1772亿', 49, 'grggrrrr'], ['深', '10712 -0.95% (-102.98)', '2685亿', 50, 'ggrrrgrr'], ['300', '3850.3 -0.58% (-22.50)', '949亿', 50, 'grggrrrr']].forEach(([n, v, a, w, q]) =>
  add('idx', `<div class="idx-part d-flex align-items-center"><span style="padding-left:2px">${n}</span><span class="fell mx-1">${v}</span><span>${a}</span><div class="meter"><div class="lvl"><div style="width:${w}%"></div></div><div class="marks d-flex justify-content-between">${[...q].map(c => `<i class="${c}"></i>`).join('')}</div></div></div>`));
['<path d="M6 2h4l1 1v4l-1 1H6L5 9v2H3L2 9V6l1-1h5V4H5V3zM10 14H6l-1-1V10l1-1h4l1-1V6h2l1 2v2l-1 2H8v1h3z" fill="#000"/>', '<path d="M4 2h8v12H4z" fill="#a00000"/><ellipse cx="8" cy="3" rx="4" ry="2" fill="#e44"/>', '<circle cx="8" cy="8" r="6" fill="#bcd"/><path d="m3 3 6 7M4 9l5-5 3 4-4 5" stroke="#046" fill="none" stroke-width="1.500"/>', '<path d="M3 12h10l-3-3V5L8 3 6 5v4zM7 14h2" fill="#ccc" stroke="#000"/>', '<path d="m1 8 6-4 7 4-5 5z" fill="#e8e020" stroke="#555"/><path d="m3 10 7-4M8 5l2 6" stroke="#555"/>', '<path d="M4 2h9v12H4z" fill="#aaa" stroke="#333"/><path d="M4 6h8M4 10h8M7 4h3M7 8h3" stroke="#333"/>'].forEach(p =>
  add('tray', `<button class="cell d-flex align-items-center justify-content-center" style="width:27px" aria-label="状态"><svg width="16" height="16">${p}</svg></button>`));

// Desktop task bar
['#8fc4e8', '#9ab', '#e0a040', '#aab', '#f08020', '#f00', '#fff', '#c22', '#222', '#7ad', '#3ae'].forEach(c => add('task', `<div style="--dot:${c}"></div>`));
</script>
</body>
</html>
